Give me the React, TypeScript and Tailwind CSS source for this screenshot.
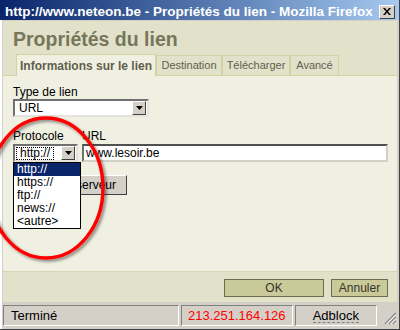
import React from "react";

const Arrow = () => (
  <span className="flex h-[14px] w-[14px] shrink-0 items-center justify-center border border-t-white border-l-white border-r-[#404040] border-b-[#404040] bg-[#d4d0c8]">
    <svg width="7" height="4" viewBox="0 0 7 4">
      <path d="M0 0h7L3.5 4z" fill="#000" />
    </svg>
  </span>
);

const tabs = [
  { label: "Destination", w: "w-[66px]" },
  { label: "Télécharger", w: "w-[68px]" },
  { label: "Avancé", w: "w-[49px]" },
];

const protocols = ["http://", "https://", "ftp://", "news://", "<autre>"];

export default function App() {
  return (
    <div className="relative flex h-[330px] w-[400px] flex-col overflow-hidden border-r border-b border-r-[#404040] border-b-[#404040] bg-[#d4d0c8] font-['Liberation_Sans',Arial,sans-serif] text-[12px] text-black">
      {/* title bar */}
      <div className="flex h-[20px] shrink-0 items-center justify-between bg-linear-to-r from-[#0a246a] to-[#a6caf0] pl-[5px] pr-[4px] pt-[3px]">
        <span className="text-[13.5px] leading-[16px] font-bold whitespace-nowrap text-white">
          http://www.neteon.be - Propriétés du lien - Mozilla Firefox
        </span>
        <span className="flex h-[14px] w-[16px] items-center justify-center border border-t-white border-l-white border-r-[#404040] border-b-[#404040] bg-[#d4d0c8]">
          <svg width="8" height="7" viewBox="0 0 8 7">
            <path d="M0 0h2l2 2.5L6 0h2L5 3.5 8 7H6L4 4.5 2 7H0l3-3.5z" fill="#000" />
          </svg>
        </span>
      </div>

      <div className="flex flex-1 flex-col border-l-2 border-l-white pl-[1px] pr-[2px] pt-[1px]">
        {/* header */}
        <div className="h-[33px] shrink-0 bg-[#e2e1c9] pl-[10px] pt-[8px]">
          <h1 className="text-[19.5px] leading-[20px] font-bold text-[#76765b]">Propriétés du lien</h1>
        </div>

        {/* tabs */}
        <div className="flex h-[21px] shrink-0 items-end bg-[#e2e1c9] pl-[13px]">
          <div className="relative z-10 -mb-px flex h-[22px] w-[140px] items-center justify-center border border-b-0 border-[#d3d3a0] bg-[#f0f0e2] text-[12px] font-bold text-[#5f5f4c]">
            Informations sur le lien
          </div>
          {tabs.map((t) => (
            <div
              key={t.label}
              className={`flex h-[20px] items-center justify-center border border-b-0 border-[#d3d3a0] text-[11px] text-[#5f5f4f] ${t.w}`}
            >
              {t.label}
            </div>
          ))}
        </div>

        {/* content */}
        <div className="flex h-[196px] shrink-0 flex-col border-t border-[#d3d3a0] bg-[#f0f0e2] pl-[10px]">
          <label className="mt-[10px] text-[12px] leading-[13px]">Type de lien</label>
          <div className="flex h-[18px] w-[136px] items-center justify-between border-2 border-t-[#6f6f6f] border-l-[#6f6f6f] border-r-[#e4e4dc] border-b-[#e4e4dc] bg-white pl-[4px] pr-[1px]">
            <span>URL</span>
            <Arrow />
          </div>

          <div className="mt-[13px] flex text-[12px] leading-[13px]">
            <span className="w-[69px]">Protocole</span>
            <span>URL</span>
          </div>
          <div className="mt-[1px] flex gap-[4px]">
            <div className="relative z-20">
              <div className="flex h-[18px] w-[65px] items-center justify-between border-2 border-t-[#6f6f6f] border-l-[#6f6f6f] border-r-[#e4e4dc] border-b-[#e4e4dc] bg-white pl-[1px] pr-[1px]">
                <span className="border border-dotted border-black px-[3px] leading-[11px]">http://</span>
                <Arrow />
              </div>
              <ul className="absolute top-full left-0 w-[68px] border border-black bg-white">
                {protocols.map((p, i) => (
                  <li
                    key={p}
                    className={`h-[13px] pl-[3px] leading-[13px] ${i === 0 ? "bg-[#0a246a] text-white" : ""}`}
                  >
                    {p}
                  </li>
                ))}
              </ul>
            </div>
            <div className="flex h-[18px] w-[306px] items-center border-2 border-t-[#505050] border-l-[#6f6f6f] border-r-[#d4d0c8] border-b-[#d4d0c8] bg-white pl-[2px]">
              www.lesoir.be
            </div>
          </div>

          <button className="mt-[13px] flex h-[20px] w-[114px] items-center justify-end border border-t-white border-l-white border-r-[#404040] border-b-[#404040] bg-[#d4d0c8] pr-[10px] text-[12px]">
            le serveur
          </button>
        </div>

        {/* button bar */}
        <div className="flex h-[31px] shrink-0 justify-end gap-[7px] border-t border-[#d6d6b6] bg-[#e2e1c9] pr-[9px] pt-[7px]">
          <button className="h-[18px] w-[100px] border border-[#6c6c4e] bg-[#c9c999] text-[12px] leading-[16px] text-[#35352a]">
            OK
          </button>
          <button className="h-[18px] w-[57px] border border-[#6c6c4e] bg-[#c9c999] text-[12px] leading-[16px] text-[#35352a]">
            Annuler
          </button>
        </div>

        {/* status bar */}
        <div className="flex h-[25px] shrink-0 items-start gap-[2px] pt-[3px]">
          <div className="flex h-[21px] w-[177px] items-center border border-t-[#808080] border-l-[#808080] border-r-white border-b-white pl-[7px] text-[13px]">
            Terminé
          </div>
          <div className="flex h-[21px] w-[112px] items-center justify-center border border-t-[#808080] border-l-[#808080] border-r-white border-b-white text-[13px] text-[#ff0000]">
            213.251.164.126
          </div>
          <div className="flex h-[21px] w-[83px] items-center justify-center border border-t-[#808080] border-l-[#808080] border-r-white border-b-white text-[13px]">
            <span className="border-b border-dashed border-[#808080] leading-[13px]">Adblock</span>
          </div>
          <svg className="mt-[7px] ml-[5px]" width="13" height="13" viewBox="0 0 13 13">
            <path d="M12 1L1 12M12 5L5 12M12 9L9 12" stroke="#808080" strokeWidth="1.3" />
            <path d="M12 2.5L2.5 12M12 6.5L6.5 12M12 10.5L10.5 12" stroke="#fff" strokeWidth="1" />
          </svg>
        </div>
      </div>

      {/* red hand-drawn circle */}
      <svg className="pointer-events-none absolute top-0 left-0 z-30" width="400" height="330" viewBox="0 0 400 330">
        <defs>
          <filter id="sh" x="-20%" y="-20%" width="140%" height="140%">
            <feDropShadow dx="2" dy="2" stdDeviation="1.8" floodColor="#000" floodOpacity="0.45" />
          </filter>
        </defs>
        <ellipse cx="46" cy="188" rx="57" ry="70" fill="none" stroke="#ff0000" strokeWidth="3.5" filter="url(#sh)" />
      </svg>
    </div>
  );
}
